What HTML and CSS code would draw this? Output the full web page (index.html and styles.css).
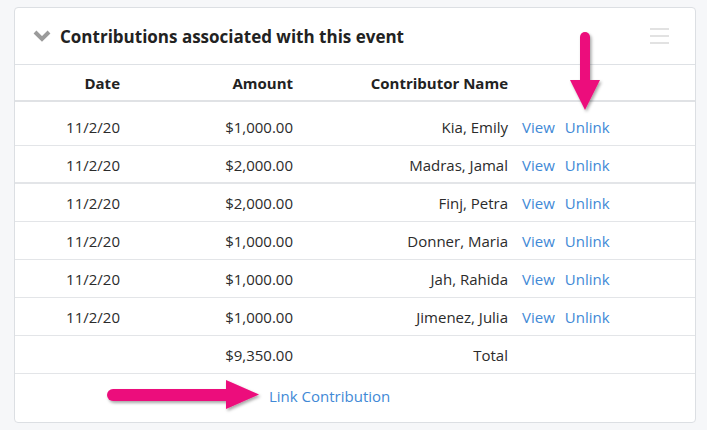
FILE: index.html
```html
<!DOCTYPE html>
<html lang="en">
<head>
    <meta name="viewport" content="width=device-width, initial-scale=1.0">
    <title>Event Contributions</title>
    <link rel="stylesheet" href="styles.css">
</head>
<body>
    <div class="card">
        <div class="card-header">
            <svg class="chevron" width="18" height="12" viewBox="0 0 18 12">
                <polyline points="2,2 9,9 16,2" fill="none" stroke="#9b9b9b" stroke-width="4"/>
            </svg>
            <h2 class="card-title">Contributions associated with this event</h2>
            <svg class="menu" width="19" height="17" viewBox="0 0 19 17">
                <rect x="0" y="0" width="19" height="2" fill="#e2e2e2"/>
                <rect x="0" y="7" width="19" height="2" fill="#e2e2e2"/>
                <rect x="0" y="14" width="19" height="2" fill="#e2e2e2"/>
            </svg>
        </div>

        <table class="contrib-table">
            <thead>
                <tr>
                    <th class="col-date">Date</th>
                    <th class="col-amount">Amount</th>
                    <th class="col-name">Contributor Name</th>
                    <th class="col-actions"></th>
                </tr>
            </thead>
            <tbody>
                <tr class="first">
                    <td>11/2/20</td>
                    <td>$1,000.00</td>
                    <td>Kia, Emily</td>
                    <td class="actions"><a href="#">View</a><a href="#">Unlink</a></td>
                </tr>
                <tr class="split">
                    <td>11/2/20</td>
                    <td>$2,000.00</td>
                    <td>Madras, Jamal</td>
                    <td class="actions"><a href="#">View</a><a href="#">Unlink</a></td>
                </tr>
                <tr>
                    <td>11/2/20</td>
                    <td>$2,000.00</td>
                    <td>Finj, Petra</td>
                    <td class="actions"><a href="#">View</a><a href="#">Unlink</a></td>
                </tr>
                <tr>
                    <td>11/2/20</td>
                    <td>$1,000.00</td>
                    <td>Donner, Maria</td>
                    <td class="actions"><a href="#">View</a><a href="#">Unlink</a></td>
                </tr>
                <tr>
                    <td>11/2/20</td>
                    <td>$1,000.00</td>
                    <td>Jah, Rahida</td>
                    <td class="actions"><a href="#">View</a><a href="#">Unlink</a></td>
                </tr>
                <tr>
                    <td>11/2/20</td>
                    <td>$1,000.00</td>
                    <td>Jimenez, Julia</td>
                    <td class="actions"><a href="#">View</a><a href="#">Unlink</a></td>
                </tr>
                <tr class="total">
                    <td></td>
                    <td>$9,350.00</td>
                    <td>Total</td>
                    <td></td>
                </tr>
            </tbody>
        </table>

        <div class="card-footer">
            <a href="#">Link Contribution</a>
        </div>
    </div>

    <!-- annotation arrows -->
    <svg class="arrows" width="707" height="430" viewBox="0 0 707 430">
        <defs>
            <filter id="shadow" x="-20%" y="-20%" width="140%" height="140%">
                <feDropShadow dx="1.5" dy="2" stdDeviation="1.5" flood-color="#000" flood-opacity="0.35"/>
            </filter>
        </defs>
        <g fill="#ec0a7b" stroke="#ec0a7b" filter="url(#shadow)">
            <line x1="585" y1="37" x2="585" y2="84" stroke-width="10" stroke-linecap="round"/>
            <polygon points="570,80 600,80 585,110" stroke="none"/>
            <line x1="113" y1="395" x2="230" y2="395" stroke-width="12" stroke-linecap="round"/>
            <polygon points="226,380 226,409 259,394.5" stroke="none"/>
        </g>
    </svg>
</body>
</html>
```

FILE: styles.css
```css
body {
    margin: 0;
    background-color: #f6f7f9;
    font-family: "Open Sans", "Noto Sans", sans-serif;
    color: #2b2b2b;
    font-size: 15px;
}
a {
    color: #4189d6;
    text-decoration: none;
}
.card {
    margin: 7px 0 0 14px;
    width: 682px;
    background-color: #fff;
    border: 1px solid #dcdfe3;
    border-radius: 4px;
    box-sizing: border-box;
}
.card-header {
    display: flex;
    align-items: center;
    height: 57px;
    padding: 0 26px 0 18px;
    border-bottom: 1px solid #dee1e5;
    box-sizing: border-box;
}
.chevron {
    margin-right: 9px;
}
.card-title {
    flex: 1;
    margin: 0;
    font-size: 17px;
    font-weight: 700;
    color: #222;
}
.contrib-table {
    width: 100%;
    border-collapse: collapse;
    table-layout: fixed;
}
.contrib-table th,
.contrib-table td {
    height: 37px;
    padding: 0 10px 0 0;
    text-align: right;
    border-bottom: 1px solid #e3e5e8;
    white-space: nowrap;
}
.contrib-table th {
    height: 35px;
    font-weight: 700;
    color: #222;
    border-bottom: 2px solid #e0e2e5;
}
.col-date { width: 105px; }
.col-amount { width: 163px; }
.col-name { width: 205px; }
.contrib-table tr.first td {
    height: 36px;
    padding-top: 7px;
}
.contrib-table tr.split td {
    height: 34px;
    padding-top: 2px;
    border-bottom: 2px solid #e3e5e8;
}
.contrib-table td.actions {
    text-align: left;
    padding-left: 4px;
}
.actions a {
    margin-right: 10px;
}
.card-footer {
    height: 44px;
    padding-bottom: 4px;
    display: flex;
    align-items: center;
    padding-left: 254px;
}
.arrows {
    position: absolute;
    left: 0;
    top: 0;
    pointer-events: none;
}
```
